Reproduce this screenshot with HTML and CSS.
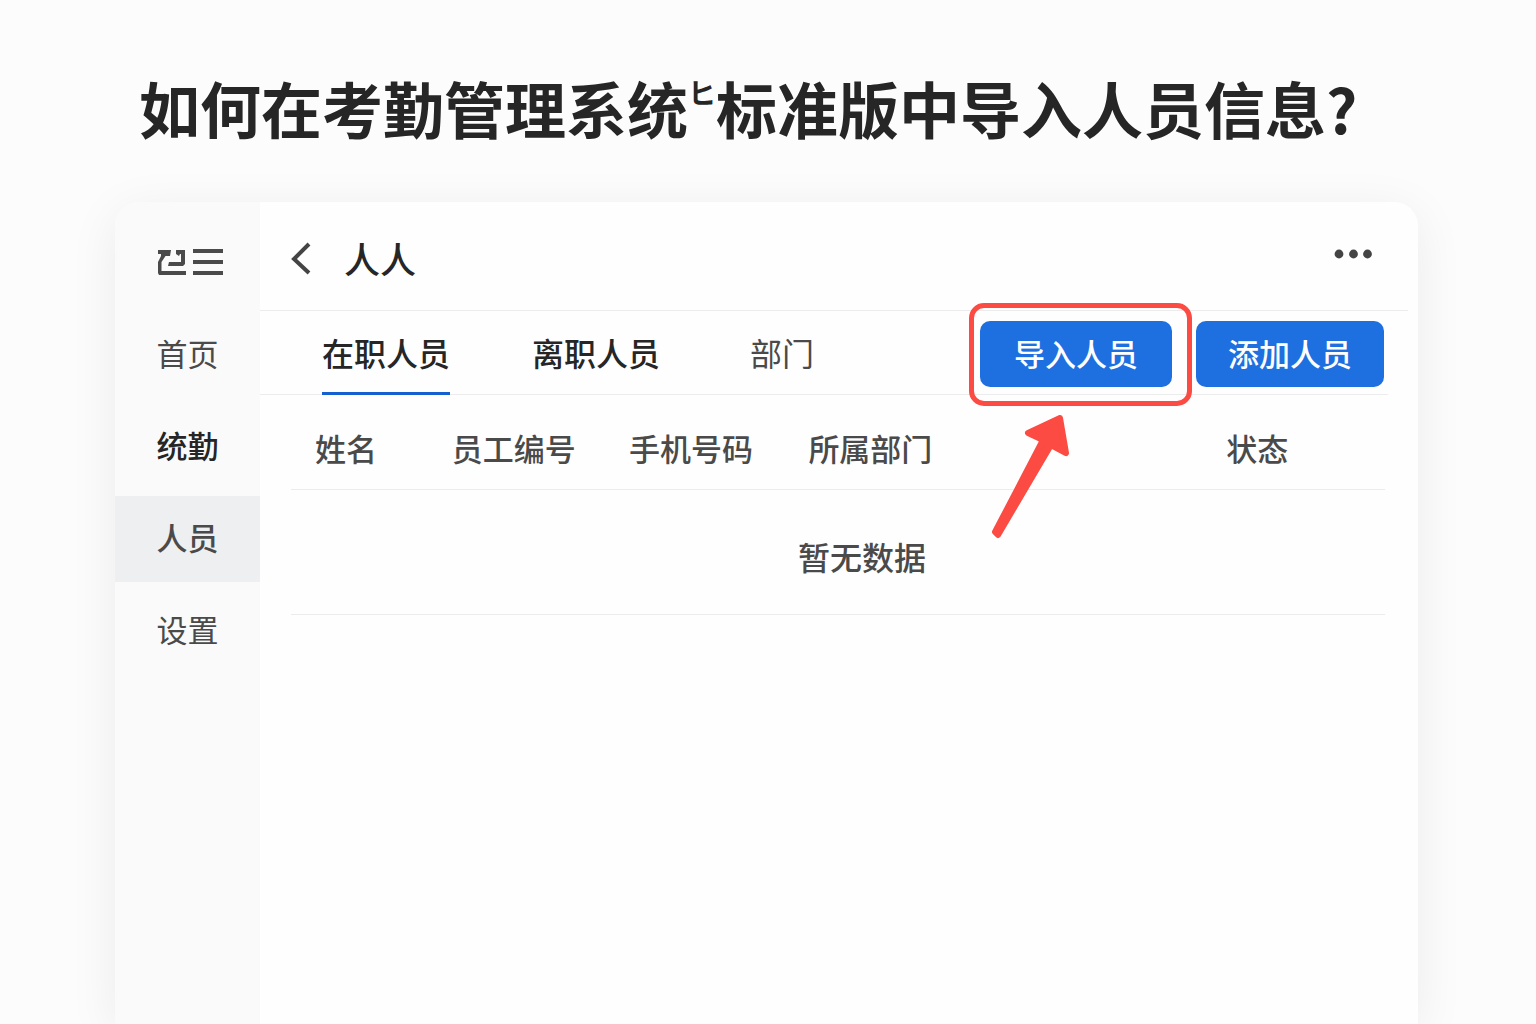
FILE: index.html
```html
<!DOCTYPE html>
<html lang="zh-CN">

<head>
  <meta charset="UTF-8">
  <meta name="viewport" content="width=device-width, initial-scale=1">
  <title>人员</title>
  <link rel="stylesheet" href="styles.css">
</head>

<body>

  <h1>如何在考勤管理系统<sup>ヒ</sup>标准版中导入人员信息?</h1>

  <div class="window">
    <nav class="sidebar">
      <a class="logo" href="#" aria-label="菜单">
        <svg width="68" height="30" viewBox="0 0 68 30" fill="#4a4a4a">
          <path d="M2 3H15L14 9H9.5L5.5 15V24H30V28H3L2 26V15L5 9V7H2Z" />
          <path d="M20 3H29V17L27 19H12L13 15H25V7H24L23 9L20 7Z" />
          <path d="M37 2H67V6H37ZM37 13H67V17H37ZM37 24H67V28H37Z" />
        </svg>
      </a>
      <a class="nav-item" href="#">首页</a>
      <a class="nav-item strong" href="#">统勤</a>
      <a class="nav-item active" href="#">人员</a>
      <a class="nav-item" href="#">设置</a>
    </nav>

    <main class="content">
      <header class="header">
        <button class="icon-btn" type="button" aria-label="返回">
          <svg width="22" height="34" viewBox="0 0 22 34" fill="none" stroke="#444" stroke-width="4">
            <path d="M19 3L4 18L19 32" />
          </svg>
        </button>
        <h2>人人</h2>
        <button class="icon-btn more" type="button" aria-label="更多">
          <svg width="38" height="10" viewBox="0 0 38 10" fill="#444">
            <circle cx="5" cy="5" r="4.4" />
            <circle cx="19.5" cy="5" r="4.4" />
            <circle cx="33.5" cy="5" r="4.4" />
          </svg>
        </button>
      </header>

      <div class="toolbar">
        <div class="tabs">
          <button class="tab active" type="button">在职人员</button>
          <button class="tab strong" type="button">离职人员</button>
          <button class="tab" type="button">部门</button>
        </div>
        <div class="actions">
          <div class="marked">
            <button class="btn btn-import" type="button">导入人员</button>
            <span class="ring"></span>
            <svg class="arrow" width="80" height="128" viewBox="0 0 80 128" fill="#fb4b43" stroke="#fb4b43" stroke-width="6" stroke-linejoin="round">
              <path d="M70 5L38 20L53 27L5 119L8 122L61 32L76 40Z" />
            </svg>
          </div>
          <button class="btn" type="button">添加人员</button>
        </div>
      </div>

      <table>
        <thead>
          <tr>
            <th class="col-name">姓名</th>
            <th class="col-number">员工编号</th>
            <th class="col-phone">手机号码</th>
            <th class="col-dept">所属部门</th>
            <th>状态</th>
          </tr>
        </thead>
        <tbody>
          <tr>
            <td class="empty" colspan="5">暂无数据</td>
          </tr>
        </tbody>
      </table>
    </main>
  </div>

</body>

</html>
```

FILE: styles.css
```css
* {
  box-sizing: border-box;
}

body {
  margin: 0;
  min-height: 100vh;
  display: flex;
  flex-direction: column;
  padding: 63px 118px 0 115px;
  font-family: 'Noto Sans CJK SC', sans-serif;
  font-size: 31px;
  color: #4a4a4a;
  background-color: #fcfcfc;
}

h1 {
  margin: 0 0 49px;
  padding-left: 24px;
  font-size: 61px;
  line-height: 90px;
  font-weight: 700;
  color: #262626;
  white-space: nowrap;
}

h1 sup {
  font-size: 28px;
  line-height: 0;
  vertical-align: 30px;
}

a {
  color: inherit;
  text-decoration: none;
}

button {
  border: none;
  padding: 0;
  background: none;
  font: inherit;
  color: inherit;
  cursor: pointer;
}

svg {
  display: block;
}

.window {
  flex: 1;
  display: flex;
  border-radius: 24px 24px 0 0;
  box-shadow: 0 10px 50px rgba(0, 0, 0, 0.07);
}

/* sidebar */
.sidebar {
  width: 145px;
  display: flex;
  flex-direction: column;
  gap: 6px;
  background-color: #fafafa;
  border-radius: 24px 0 0 0;
}

.logo {
  height: 104px;
  display: flex;
  align-items: center;
  padding: 16px 0 0 41px;
}

.nav-item {
  height: 86px;
  line-height: 82px;
  text-align: center;
}

.nav-item.active {
  background-color: #eeeff1;
  font-weight: 500;
}

.strong {
  color: #262626;
  font-weight: 500;
}

/* content */
.content {
  flex: 1;
  background-color: #fefefe;
  border-radius: 0 24px 0 0;
}

.header {
  height: 109px;
  margin-right: 10px;
  padding: 4px 36px 0 30px;
  display: flex;
  align-items: center;
  border-bottom: 1px solid #ececec;
}

h2 {
  margin: 0 auto 0 32px;
  font-size: 36px;
  line-height: 52px;
  font-weight: 500;
  color: #262626;
}

.more {
  padding-bottom: 8px;
}

.toolbar {
  height: 84px;
  margin-right: 30px;
  padding-left: 62px;
  display: flex;
  justify-content: space-between;
  border-bottom: 1px solid #ececec;
}

.tabs {
  display: flex;
  gap: 82px;
}

.tab {
  height: 84px;
  font-size: 32px;
  border-bottom: 3px solid transparent;
}

.tab.active {
  color: #262626;
  font-weight: 500;
  border-color: #1460d0;
}

.tab:last-child {
  margin-left: 8px;
}

.actions {
  display: flex;
  align-items: flex-start;
  gap: 24px;
  padding: 10px 4px 0 0;
}

.marked {
  position: relative;
}

.btn {
  display: block;
  height: 66px;
  padding: 0 32px 4px;
  border-radius: 10px;
  background-color: #1e6fdf;
  color: #fff;
  font-weight: 500;
}

.btn-import {
  padding: 0 34px 4px;
}

.ring {
  position: absolute;
  inset: -18px -20px -19px -11px;
  border: 5px solid #fb4b43;
  border-radius: 15px;
  pointer-events: none;
}

.arrow {
  position: absolute;
  top: 92px;
  left: 10px;
  pointer-events: none;
}

table {
  width: calc(100% - 64px);
  margin-left: 31px;
  border-collapse: collapse;
  table-layout: fixed;
}

th {
  height: 94px;
  padding: 11px 0 0 24px;
  text-align: left;
  font-weight: 500;
  border-bottom: 1px solid #ececec;
  white-space: nowrap;
}

.col-name {
  width: 12.5%;
}

.col-number {
  width: 16.2%;
}

.col-phone {
  width: 16.4%;
}

.col-dept {
  width: 38.2%;
}

.empty {
  height: 125px;
  padding: 8px 0 0 48px;
  font-size: 32px;
  font-weight: 500;
  text-align: center;
  border-bottom: 1px solid #ececec;
}
```
